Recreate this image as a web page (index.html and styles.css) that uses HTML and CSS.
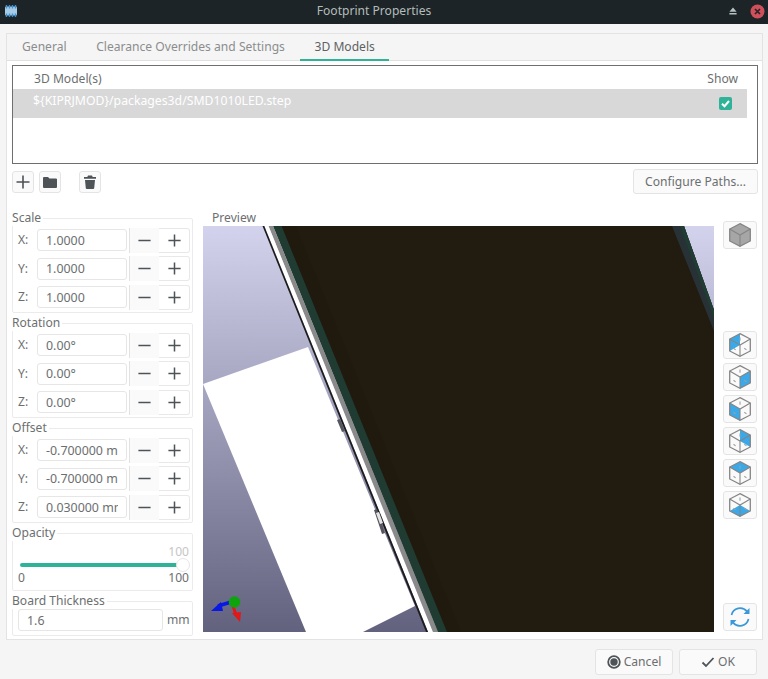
FILE: index.html
```html
<!DOCTYPE html>
<html lang="en">
<head>
<meta charset="utf-8">
<title>Footprint Properties</title>
<link rel="stylesheet" href="styles.css">
</head>
<body>
<svg class="defs" width="0" height="0" aria-hidden="true">
  <defs>
    <symbol id="plus" viewBox="0 0 16 16"><path d="M8 1.500v13M1.500 8h13" fill="none" stroke="#4d5356" stroke-width="1.600"/></symbol>
    <symbol id="minus" viewBox="0 0 16 16"><path d="M1.500 8h13" fill="none" stroke="#4d5356" stroke-width="1.600"/></symbol>
    <g id="cube-lines">
      <path d="M12 1.500 21.500 6.500V17.500L12 22.500 2.500 17.500V6.500Z" fill="none" stroke="#858585" stroke-width="1.200"/>
      <path d="M2.500 6.500 12 12 21.500 6.500M12 12V22.500" fill="none" stroke="#858585" stroke-width="1"/>
      <path d="M12 5V8M6 15l2 1.500M16 15l2 1.500" fill="none" stroke="#a0a0a0" stroke-width="1"/>
    </g>
  </defs>
</svg>

<header class="titlebar">
  <svg class="logo" viewBox="0 0 12 12" width="12" height="12">
    <rect x="0" y="1.500" width="12" height="9" rx="1" fill="#a6cbe6"/>
    <path d="M1.500 0v12M4.500 0v12M7.500 0v12M10.500 0v12" stroke="#3b93d6" stroke-width="1.400" stroke-dasharray="3.500 5 3.500"/>
  </svg>
  <span class="title">Footprint Properties</span>
  <svg class="shade" viewBox="0 0 10 9" width="8" height="8"><path d="M5 0 9.500 5.500H.5Z M.5 7h9v2h-9Z" fill="#b5c0c0"/></svg>
  <svg class="close" viewBox="0 0 15 15" width="15" height="15">
    <circle cx="7.500" cy="7.500" r="7" fill="#cf4f5b"/>
    <path d="M5 5l5 5M10 5l-5 5" stroke="#2a2326" stroke-width="1.700"/>
  </svg>
</header>

<main class="notebook">
  <nav class="tabs">
    <span class="tab">General</span>
    <span class="tab">Clearance Overrides and Settings</span>
    <span class="tab active">3D Models</span>
  </nav>
  <section class="page">
    <div class="list">
      <div class="list-head"><span>3D Model(s)</span><span class="show-head">Show</span></div>
      <div class="list-row">
        <span class="path">${KIPRJMOD}/packages3d/SMD1010LED.step</span>
        <svg class="check" viewBox="0 0 13 13" width="13" height="13">
          <rect width="13" height="13" rx="2" fill="#2eb398"/>
          <path d="M3 6.800 5.500 9.200 10 4" fill="none" stroke="#fff" stroke-width="2"/>
        </svg>
      </div>
    </div>

    <div class="toolbar">
      <button class="btn tool"><svg width="16" height="16"><use href="#plus"/></svg></button>
      <button class="btn tool"><svg viewBox="0 0 16 16" width="16" height="16"><path d="M1 4a1 1 0 0 1 1-1h4l1.500 1.500H14a1 1 0 0 1 1 1V13a1 1 0 0 1-1 1H2a1 1 0 0 1-1-1Z" fill="#4d5356"/></svg></button>
      <button class="btn tool tool-gap"><svg viewBox="0 0 16 16" width="16" height="16"><path d="M6 1.500h4L10.700 3H14v1.800H2V3h3.300ZM3 6h10l-.8 8.200a1 1 0 0 1-1 .8H4.800a1 1 0 0 1-1-.8Z" fill="#4d5356"/></svg></button>
      <button class="btn configure">Configure Paths...</button>
    </div>

    <div class="workspace">
      <div class="controls">
        <fieldset class="group triple">
          <legend>Scale</legend>
          <div class="row"><label>X:</label><input class="field" value="1.0000" readonly><span class="spin"><span class="dec"><svg width="15" height="15"><use href="#minus"/></svg></span><span class="inc"><svg width="15" height="15"><use href="#plus"/></svg></span></span></div>
          <div class="row"><label>Y:</label><input class="field" value="1.0000" readonly><span class="spin"><span class="dec"><svg width="15" height="15"><use href="#minus"/></svg></span><span class="inc"><svg width="15" height="15"><use href="#plus"/></svg></span></span></div>
          <div class="row"><label>Z:</label><input class="field" value="1.0000" readonly><span class="spin"><span class="dec"><svg width="15" height="15"><use href="#minus"/></svg></span><span class="inc"><svg width="15" height="15"><use href="#plus"/></svg></span></span></div>
        </fieldset>
        <fieldset class="group triple">
          <legend>Rotation</legend>
          <div class="row"><label>X:</label><input class="field" value="0.00°" readonly><span class="spin"><span class="dec"><svg width="15" height="15"><use href="#minus"/></svg></span><span class="inc"><svg width="15" height="15"><use href="#plus"/></svg></span></span></div>
          <div class="row"><label>Y:</label><input class="field" value="0.00°" readonly><span class="spin"><span class="dec"><svg width="15" height="15"><use href="#minus"/></svg></span><span class="inc"><svg width="15" height="15"><use href="#plus"/></svg></span></span></div>
          <div class="row"><label>Z:</label><input class="field" value="0.00°" readonly><span class="spin"><span class="dec"><svg width="15" height="15"><use href="#minus"/></svg></span><span class="inc"><svg width="15" height="15"><use href="#plus"/></svg></span></span></div>
        </fieldset>
        <fieldset class="group triple">
          <legend>Offset</legend>
          <div class="row"><label>X:</label><input class="field" value="-0.700000 mm" readonly><span class="spin"><span class="dec"><svg width="15" height="15"><use href="#minus"/></svg></span><span class="inc"><svg width="15" height="15"><use href="#plus"/></svg></span></span></div>
          <div class="row"><label>Y:</label><input class="field" value="-0.700000 mm" readonly><span class="spin"><span class="dec"><svg width="15" height="15"><use href="#minus"/></svg></span><span class="inc"><svg width="15" height="15"><use href="#plus"/></svg></span></span></div>
          <div class="row"><label>Z:</label><input class="field" value="0.030000 mm" readonly><span class="spin"><span class="dec"><svg width="15" height="15"><use href="#minus"/></svg></span><span class="inc"><svg width="15" height="15"><use href="#plus"/></svg></span></span></div>
        </fieldset>
        <fieldset class="group opacity">
          <legend>Opacity</legend>
          <div class="slider-value">100</div>
          <div class="slider"><span class="track"></span><span class="thumb"></span></div>
          <div class="slider-scale"><span>0</span><span>100</span></div>
        </fieldset>
        <fieldset class="group thickness">
          <legend>Board Thickness</legend>
          <div class="thick-row"><input class="field wide" value="1.6" readonly><span>mm</span></div>
        </fieldset>
      </div>

      <div class="preview">
        <div class="preview-label">Preview</div>
        <svg class="canvas" viewBox="203 226 511 406" width="511" height="406">
          <defs>
            <linearGradient id="sky" x1="0" y1="0" x2="0" y2="1">
              <stop offset="0" stop-color="#d3d3ee"/>
              <stop offset="1" stop-color="#62627e"/>
            </linearGradient>
          </defs>
          <rect x="203" y="226" width="511" height="406" fill="url(#sky)"/>
          <path d="M281 226H684L714 310V632H446Z" fill="#221c10"/>
          <path d="M281 226H296L461 632H446Z" fill="#201a0e"/>
          <path d="M672 226H684L714 310V331Z" fill="#283236"/>
          <path d="M680 226H684L714 310V318Z" fill="#1f3d33"/>
          <path d="M273 226H281.500L447 632H438Z" fill="#1f3b32"/>
          <path d="M268.500 226H273L438 632H433Z" fill="#8a8a8a"/>
          <path d="M264.300 226H268.500L433 632H428Z" fill="#fff"/>
          <path d="M262.500 226H264.300L428 632H426Z" fill="#1c1c1c"/>
          <path d="M203 384 308 347 415 606 363 632H306Z" fill="#fff"/>
          <path d="M337 420l3-1 5 12-3 1ZM374 510l3-1 8 24-3 1Z" fill="#55555f"/>
          <path d="M376 513l3-1 4 11-3 1Z" fill="#e4e4e4"/>
          <path d="M231 602 218 606" stroke="#0a18e6" stroke-width="3.500"/>
          <path d="M221 602 211 611 223 611Z" fill="#0a18e6"/>
          <path d="M233 606 236 615" stroke="#e01818" stroke-width="3"/>
          <path d="M232 613 241 612 240 622Z" fill="#e01818"/>
          <circle cx="234.500" cy="602" r="5.800" fill="#0ea40e"/>
        </svg>
      </div>

      <div class="views">
        <button class="btn view first"><svg viewBox="0 0 24 24" width="26" height="26">
          <path d="M12 1.500 21.500 6.500V17.500L12 22.500 2.500 17.500V6.500Z" fill="#a6a6a6" stroke="#858585" stroke-width="1.200"/>
          <path d="M2.500 6.500 12 12 21.500 6.500M12 12V22.500" fill="none" stroke="#858585"/>
        </svg></button>
        <div class="view-group">
          <button class="btn view"><svg viewBox="0 0 24 24" width="26" height="26"><path d="M12 1.500 2.500 6.500V17.500L12 12Z" fill="#39a9ea"/><use href="#cube-lines"/></svg></button>
          <button class="btn view"><svg viewBox="0 0 24 24" width="26" height="26"><path d="M12 12 21.500 6.500V17.500L12 22.500Z" fill="#39a9ea"/><use href="#cube-lines"/></svg></button>
          <button class="btn view"><svg viewBox="0 0 24 24" width="26" height="26"><path d="M2.500 6.500 12 12V22.500L2.500 17.500Z" fill="#39a9ea"/><use href="#cube-lines"/></svg></button>
          <button class="btn view"><svg viewBox="0 0 24 24" width="26" height="26"><path d="M12 1.500 21.500 6.500V17.500L12 12Z" fill="#39a9ea"/><use href="#cube-lines"/></svg></button>
          <button class="btn view"><svg viewBox="0 0 24 24" width="26" height="26"><path d="M12 1.500 21.500 6.500 12 12 2.500 6.500Z" fill="#39a9ea"/><use href="#cube-lines"/></svg></button>
          <button class="btn view"><svg viewBox="0 0 24 24" width="26" height="26"><path d="M12 12 21.500 17.500 12 22.500 2.500 17.500Z" fill="#39a9ea"/><use href="#cube-lines"/></svg></button>
        </div>
        <button class="btn view last"><svg viewBox="0 0 24 24" width="24" height="24">
          <path d="M3.500 10A8.800 8.800 0 0 1 19 6.500" fill="none" stroke="#3a97d8" stroke-width="1.700"/>
          <path d="M21.500 3V9H15.500Z" fill="#3a97d8"/>
          <path d="M20.500 14A8.800 8.800 0 0 1 5 17.500" fill="none" stroke="#3a97d8" stroke-width="1.700"/>
          <path d="M2.500 21V15H8.500Z" fill="#3a97d8"/>
        </svg></button>
      </div>
    </div>
  </section>
</main>

<footer class="footer">
  <button class="btn action"><svg viewBox="0 0 14 14" width="14" height="14"><circle cx="7" cy="7" r="5.800" fill="none" stroke="#4d5356" stroke-width="1.800"/><circle cx="7" cy="7" r="3.700" fill="#4d5356"/></svg>Cancel</button>
  <button class="btn action"><svg viewBox="0 0 14 14" width="14" height="14"><path d="M1.500 7.500 5 11 12.500 3" fill="none" stroke="#4d5356" stroke-width="1.800"/></svg>OK</button>
</footer>
</body>
</html>
```
FILE: styles.css
```css
* { box-sizing: border-box; }
html, body { margin: 0; height: 100%; }
body {
  width: 768px;
  height: 679px;
  overflow: hidden;
  display: flex;
  flex-direction: column;
  background: #f5f5f5;
  color: #6c6f70;
  font: 12.1px/16px "Noto Sans", sans-serif;
}
.defs { position: absolute; }
svg { display: block; flex: none; }

.titlebar {
  height: 24px;
  flex: none;
  display: flex;
  align-items: center;
  padding: 0 3px 2px 5px;
  background: #1c2427;
  color: #b4bcbc;
}
.title { flex: 1; text-align: center; padding-left: 2px; }
.shade { margin-right: 13px; }

.notebook {
  margin: 9px 5px 0 6px;
  height: 607px;
  flex: none;
  border: 1px solid #e3e3e3;
  display: flex;
  flex-direction: column;
}
.tabs {
  height: 27px;
  flex: none;
  display: flex;
  border-bottom: 1px solid #e0e0e0;
}
.tab { padding: 5px 14.6px 0 15px; height: 27px; color: #8b8d8e; }
.tab.active { color: #5e6163; border-bottom: 2px solid #2eb398; }

.page {
  flex: 1;
  background: #fff;
  padding: 4px 4px 0 5px;
  display: flex;
  flex-direction: column;
}
.list {
  height: 99px;
  flex: none;
  border: 1px solid #6f6f6f;
  background: #fff;
}
.list-head {
  height: 23px;
  display: flex;
  justify-content: space-between;
  align-items: center;
  padding: 2px 19px 0 21px;
}
.list-row {
  height: 29px;
  width: 734px;
  background: #d8d8d8;
  color: #fff;
  display: flex;
  justify-content: space-between;
  align-items: center;
  padding: 0 15px 1px 20px;
}
.path { margin-top: -4px; font-size: 12.25px; }

.btn {
  font: inherit;
  color: inherit;
  background: #fafafa;
  border: 1px solid #e4e4e4;
  border-radius: 3px;
  padding: 0;
  display: flex;
  align-items: center;
  justify-content: center;
}
.toolbar {
  height: 25px;
  margin-top: 5px;
  flex: none;
  display: flex;
  align-items: center;
  gap: 5px;
}
.tool { width: 22px; height: 22px; }
.tool-gap { margin-left: 13px; }
.configure { width: 125px; height: 25px; margin-left: auto; }

.workspace {
  margin-top: 16px;
  display: grid;
  grid-template-columns: 181px 511px 34px;
  column-gap: 10px;
}
.controls { display: flex; flex-direction: column; gap: 2px; }
.group {
  margin: 0;
  padding: 0 2px 0 5px;
  min-width: 0;
  border: 1px solid #ebebeb;
  border-radius: 2px;
}
legend { padding: 0 2px 0 0; margin-left: -6px; line-height: 16px; }
.triple { height: 103px; }
.row { height: 28.6px; display: flex; align-items: center; }
.row label { width: 20px; }
.field {
  display: block;
  width: 90px;
  height: 22px;
  padding: 0 8px;
  margin: 0;
  font: 12.4px/16px "Noto Sans", sans-serif;
  color: inherit;
  background: #fff;
  border: 1px solid #e6e6e6;
  border-radius: 3px;
  outline: none;
}
.spin { display: flex; margin-left: 2px; height: 25px; }
.dec, .inc { display: flex; align-items: center; justify-content: center; }
.dec { width: 30px; border-left: 1px solid #e2e2e2; background: #fafafa; }
.inc {
  width: 31px;
  border: 1px solid #e8e8e8;
  border-left: 0;
  border-radius: 0 3px 3px 0;
}

.opacity { height: 66px; padding: 0 3px 0 5px; }
.slider-value { text-align: right; color: #c6c6c6; height: 13px; line-height: 14px; margin-top: 4px; }
.slider { position: relative; height: 14px; }
.track { display: block; position: absolute; left: 2px; right: 8px; top: 5px; height: 4px; border-radius: 2px; background: #2eb398; }
.thumb { position: absolute; right: -1px; top: 0; width: 14px; height: 14px; border-radius: 50%; background: #fff; border: 1px solid #e6e6e6; }
.slider-scale { display: flex; justify-content: space-between; line-height: 16px; margin-top: -2px; }

.thickness { height: 43px; padding: 0 3px 0 5px; }
.thick-row { display: flex; align-items: center; gap: 4px; }
.wide { width: 145px; flex: none; }

.preview-label { height: 16px; padding-left: 9px; }
.views { padding-top: 11px; display: flex; flex-direction: column; height: 421px; width: 34px; margin-left: -1px; }
.view { width: 34px; height: 28px; flex: none; }
.view-group { display: flex; flex-direction: column; gap: 4px; margin-top: 82px; }
.last { margin-top: auto; }

.footer {
  flex: 1;
  display: flex;
  justify-content: flex-end;
  gap: 6px;
  padding: 9px 11px 4px 0;
}
.action { width: 78px; height: 26px; gap: 3px; }
```
